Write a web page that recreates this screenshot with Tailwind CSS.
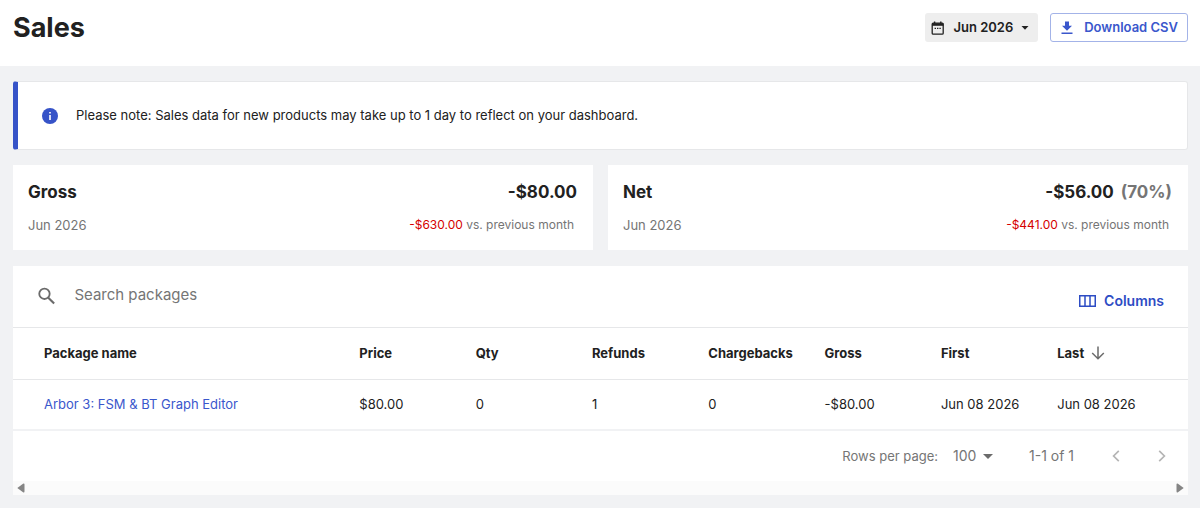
<!DOCTYPE html>
<html lang="en">
<head>
<meta charset="utf-8">
<meta name="viewport" content="width=device-width, initial-scale=1">
<title>Sales</title>
<script src="https://cdn.jsdelivr.net/npm/@tailwindcss/browser@4"></script>
</head>
<body class="min-h-screen bg-[#f1f2f4] font-['Inter',sans-serif] text-[13px] text-[#212121]">
<header class="flex h-[66px] items-start justify-between bg-white pt-[13px] pr-3 pl-[13px]">
  <h1 class="text-[27px] leading-[30px] font-bold">Sales</h1>
  <div class="flex gap-3">
    <button type="button" class="flex h-[29px] items-center rounded-[3px] bg-[#eeeeee] px-1.5 font-semibold">
      <svg class="mr-2 size-[14px]" viewBox="0 0 14 14" fill="none" stroke="#212121"><rect x="1.2" y="2.2" width="11" height="11" rx="1" stroke-width="1.3"/><path d="M1 3.5h11.4" stroke-width="2.6"/><path d="M3.6.4v2M9.8.4v2" stroke-width="1.4"/><path d="M3.6 7.4h1.400M6 7.4h1.400M8.4 7.4h1.400" stroke-width="1.2"/></svg>
      Jun 2026
      <svg class="mr-[3px] ml-2 h-1 w-2" viewBox="0 0 8 4"><path d="M.5 0h7L4 3.7z" fill="#212121"/></svg>
    </button>
    <button type="button" class="flex h-[29px] items-center rounded-[3px] border border-[#a3b3e8] px-[9px] font-semibold text-[#3a57cc]">
      <svg class="mr-[10px] size-[14px]" viewBox="0 0 14 14" fill="#3a57cc"><path d="M5 .5h4v4.300h3L7 9.700 2 4.800h3zM1.500 11.500h11V13h-11z"/></svg>
      Download CSV
    </button>
  </div>
</header>
<main class="pt-[15px] pr-3 pl-[13px]">
  <div class="flex h-[69px] items-center rounded-[3px] border border-l-[5px] border-[#e6e7e9] border-l-[#3653c8] bg-white pl-6">
    <svg class="mr-[18px] size-4" viewBox="0 0 16 16"><circle cx="8" cy="8" r="8" fill="#3653c8"/><path d="M7.200 7h1.600v5H7.200zM7.200 4h1.600v1.600H7.200z" fill="#fff"/></svg>
    <p>Please note: Sales data for new products may take up to 1 day to reflect on your dashboard.</p>
  </div>
  <div class="mt-[15px] grid grid-cols-2 gap-[15px]">
    <section class="flex h-[85px] justify-between bg-white pt-[15px] pr-4 pl-[15px]">
      <div>
        <h2 class="text-[17px] leading-6 font-bold">Gross</h2>
        <p class="mt-[11px] leading-5 text-[#757575]">Jun 2026</p>
      </div>
      <div class="text-right">
        <p class="text-[17px] leading-6 font-bold">-$80.00</p>
        <p class="mt-[11px] pr-[3px] text-xs leading-5 text-[#757575]"><span class="text-[#d50000]">-$630.00</span> vs. previous month</p>
      </div>
    </section>
    <section class="flex h-[85px] justify-between bg-white pt-[15px] pr-4 pl-[15px]">
      <div>
        <h2 class="text-[17px] leading-6 font-bold">Net</h2>
        <p class="mt-[11px] leading-5 text-[#757575]">Jun 2026</p>
      </div>
      <div class="text-right">
        <p class="text-[17px] leading-6 font-bold">-$56.00 <span class="ml-[3px] text-[#757575]">(70%)</span></p>
        <p class="mt-[11px] pr-[3px] text-xs leading-5 text-[#757575]"><span class="text-[#d50000]">-$441.00</span> vs. previous month</p>
      </div>
    </section>
  </div>
  <section class="mt-4 bg-white">
    <div class="flex h-[62px] items-center justify-between border-b border-[#e6e7e9] pr-6 pl-[25px]">
      <label class="flex flex-1 items-center pb-0.5">
        <svg class="mr-[19px] size-[18px]" viewBox="0 0 18 18" fill="none" stroke="#6b6b6b"><circle cx="6.700" cy="6.700" r="5.400" stroke-width="1.900"/><path d="M10.700 10.700l6 6" stroke-width="2.200"/></svg>
        <input type="search" aria-label="Search packages" placeholder="Search packages" class="w-full text-[15px] outline-none placeholder:text-[#757575]">
      </label>
      <button type="button" class="mt-2 flex items-center text-sm font-semibold text-[#2d4cc4]">
        <svg class="mr-2 h-3 w-[17px]" viewBox="0 0 17 12" fill="none" stroke="#2d4cc4" stroke-width="1.500"><path d="M.75.75h15.500v10.500H.75zM6 .75v10.500M11 .75v10.500"/></svg>
        Columns
      </button>
    </div>
    <table class="w-full table-fixed text-left">
      <thead>
        <tr class="h-[51px] border-b border-[#e6e7e9]">
          <th class="w-[28.2%] pl-[31px] font-bold">Package name</th>
          <th class="w-[9.9%] pl-[15px] font-bold">Price</th>
          <th class="w-[9.9%] pl-[15px] font-bold">Qty</th>
          <th class="w-[9.9%] pl-[15px] font-bold">Refunds</th>
          <th class="w-[9.9%] pl-[15px] font-bold">Chargebacks</th>
          <th class="w-[9.9%] pl-[15px] font-bold">Gross</th>
          <th class="w-[9.9%] pl-[15px] font-bold">First</th>
          <th class="pl-[15px] font-bold" aria-sort="descending"><button type="button" class="flex items-center">Last <svg class="ml-[7px] size-[14px]" viewBox="0 0 14 14" fill="none" stroke="#6b6b6b" stroke-width="1.500"><path d="M7 .5v12M1.200 7L7 12.700 12.800 7"/></svg></button></th>
        </tr>
      </thead>
      <tbody>
        <tr class="h-[51px] border-b-2 border-[#f1f2f4]">
          <td class="pl-[31px]"><a href="#" class="text-[#3a57cc]">Arbor 3: FSM &amp; BT Graph Editor</a></td>
          <td class="pl-[15px]">$80.00</td>
          <td class="pl-[15px]">0</td>
          <td class="pl-[15px]">1</td>
          <td class="pl-[15px]">0</td>
          <td class="pl-[15px]">-$80.00</td>
          <td class="pl-[15px]">Jun 08 2026</td>
          <td class="pl-[15px]">Jun 08 2026</td>
        </tr>
      </tbody>
    </table>
    <div class="flex h-[50px] items-center justify-end pr-[22px] text-sm text-[#757575]">
      <label for="rows" class="text-[13px]">Rows per page:</label>
      <div class="ml-[15px] flex items-center">
        <select id="rows" class="-mr-[10px] w-10 appearance-none pr-3 outline-none"><option>100</option></select>
        <svg class="pointer-events-none h-[5px] w-[10px]" viewBox="0 0 10 5"><path d="M0 0h10L5 5z" fill="#6b6b6b"/></svg>
      </div>
      <span class="ml-9">1-1 of 1</span>
      <button type="button" disabled aria-label="Previous page" class="ml-[38px]"><svg class="h-3 w-2" viewBox="0 0 8 12" fill="none" stroke="#b5b5b5" stroke-width="1.700"><path d="M6.800.8L1.600 6l5.200 5.200"/></svg></button>
      <button type="button" disabled aria-label="Next page" class="ml-[38px]"><svg class="h-3 w-2" viewBox="0 0 8 12" fill="none" stroke="#b5b5b5" stroke-width="1.700"><path d="M1.200.8L6.400 6l-5.200 5.200"/></svg></button>
    </div>
    <div class="flex h-[14px] items-center justify-between bg-[#fbfbfb] px-1">
      <svg class="h-[10px] w-2" viewBox="0 0 8 10"><path d="M.3 5L6 .7q1.500-.7 1.500 1v6.600q0 1.700-1.500 1z" fill="#858585"/></svg>
      <svg class="h-[10px] w-2" viewBox="0 0 8 10"><path d="M7.700 5L2 .7Q.5 0 .5 1.700v6.600q0 1.700 1.500 1z" fill="#858585"/></svg>
    </div>
  </section>
</main>
</body>
</html>
